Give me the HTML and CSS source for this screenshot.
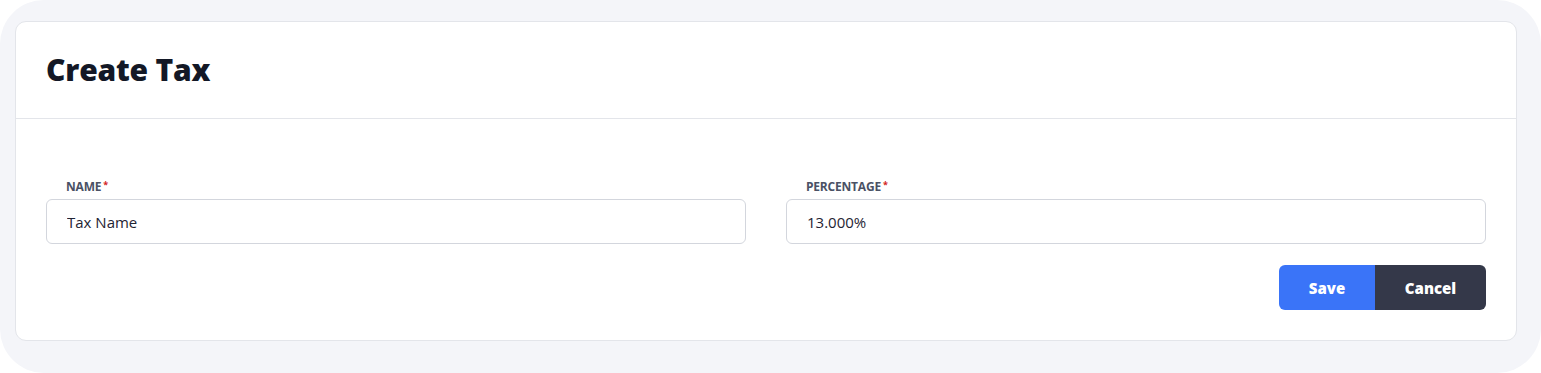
FILE: index.html
```html
<!DOCTYPE html>
<html lang="en">
<head>
<meta charset="utf-8">
<title>Create Tax</title>
<link rel="stylesheet" href="styles.css">
</head>
<body>
<div class="frame">
  <div class="card">
    <div class="card-header">
      <h1 class="title">Create Tax</h1>
    </div>
    <form class="card-body">
      <div class="fields">
        <div class="field">
          <label class="label">NAME<span class="req">*</span></label>
          <input class="input" type="text" value="Tax Name">
        </div>
        <div class="field">
          <label class="label">PERCENTAGE<span class="req">*</span></label>
          <input class="input" type="text" value="13.000%">
        </div>
      </div>
      <div class="actions">
        <button type="button" class="btn btn-save">Save</button>
        <button type="button" class="btn btn-cancel">Cancel</button>
      </div>
    </form>
  </div>
</div>
</body>
</html>
```
FILE: styles.css
```css
* { box-sizing: border-box; }
html, body { margin: 0; background: #ffffff; }
body { font-family: "Open Sans", "Noto Sans", sans-serif; }

.frame {
  width: 1541px;
  height: 373px;
  background: #f4f5f9;
  border-radius: 44px;
  padding: 21px 24px 32px 15px;
}

.card {
  background: #ffffff;
  border: 1px solid #e3e5ea;
  border-radius: 11px;
  height: 100%;
  display: flex;
  flex-direction: column;
}

.card-header {
  height: 97px;
  border-bottom: 1px solid #e3e5ea;
  display: flex;
  align-items: center;
  padding: 0 30px;
}

.title {
  margin: 0;
  font-family: "Open Sans", sans-serif;
  font-weight: 800;
  font-size: 30px;
  letter-spacing: -0.2px;
  color: #131826;
  padding-bottom: 2px;
}

.card-body {
  margin: 0;
  padding: 60px 30px 30px 30px;
  display: flex;
  flex-direction: column;
  gap: 21px;
}

.fields {
  display: grid;
  grid-template-columns: 1fr 1fr;
  column-gap: 40px;
}

.field {
  display: flex;
  flex-direction: column;
  gap: 5px;
}

.label {
  padding-left: 20px;
  font-size: 12px;
  font-weight: 700;
  color: #4a5165;
  line-height: 15px;
  letter-spacing: -0.2px;
}

.req {
  color: #d41f1f;
  font-size: 9px;
  vertical-align: top;
  margin-left: 2px;
  position: relative;
  top: -2px;
}

.input {
  height: 45px;
  border: 1px solid #d3d6dd;
  border-radius: 6px;
  padding: 0 20px;
  font-family: "Open Sans", sans-serif;
  font-size: 15px;
  font-weight: 500;
  color: #1f2433;
  background: #ffffff;
  outline: none;
}

.actions {
  display: flex;
  justify-content: flex-end;
}

.btn {
  height: 45px;
  border: 0;
  font-family: "Open Sans", sans-serif;
  font-weight: 800;
  font-size: 15px;
  color: #ffffff;
  cursor: pointer;
}

.btn-save {
  width: 96px;
  background: #3a74f8;
  border-radius: 6px 0 0 6px;
}

.btn-cancel {
  width: 111px;
  background: #343849;
  border-radius: 0 6px 6px 0;
}
```
